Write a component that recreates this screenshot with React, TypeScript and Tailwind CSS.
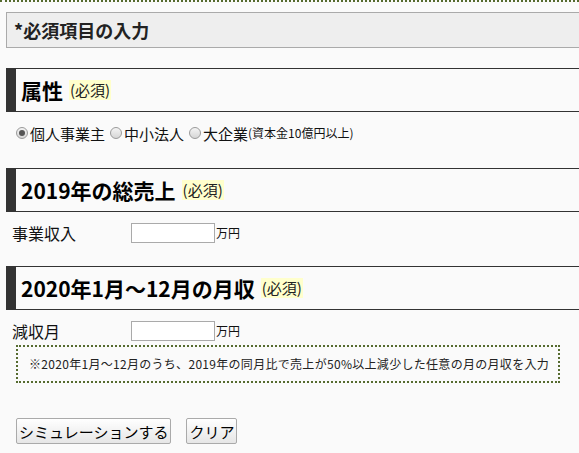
const font = { fontFamily: '"Noto Sans CJK JP", "Noto Sans", sans-serif' };

function SectionTitle({ title }: { title: string }) {
  return (
    <div className="flex h-[44px] items-center border-y border-l-[10px] border-[#333] pl-[5px]">
      <span className="text-[21px] font-bold leading-none text-black">{title}</span>
      <span className="ml-[6px] bg-[#ffffcc] px-[1px] text-[15px] leading-[20px] text-[#222]">(必須)</span>
    </div>
  );
}

function Radio({ label, checked, note }: { label: string; checked?: boolean; note?: string }) {
  return (
    <label className="mr-[3px] flex items-center">
      <span className="mx-[2px] flex h-[12px] w-[12px] items-center justify-center rounded-full border border-[#9a9a9a] bg-gradient-to-b from-[#f4f4f4] to-[#d6d6d6]">
        {checked && <span className="h-[6px] w-[6px] rounded-full bg-[#555]" />}
      </span>
      <span className="text-[15px] leading-none text-[#111]">{label}</span>
      {note && <span className="text-[12px] leading-none text-[#111]">{note}</span>}
    </label>
  );
}

function AmountRow({ label }: { label: string }) {
  return (
    <div className="flex h-[20px] items-center">
      <span className="w-[125px] pl-[6px] text-[16px] leading-none text-[#111]">{label}</span>
      <input type="text" className="h-[20px] w-[84px] border border-[#aaa] bg-white outline-none" />
      <span className="ml-[1px] text-[12px] leading-none text-[#111]">万円</span>
    </div>
  );
}

export default function App() {
  return (
    <div className="min-h-[453px] w-[579px] overflow-hidden bg-[#fafafa] pl-[6px]" style={font}>
      <div className="-ml-[6px] h-[2px] border-t-2 border-dotted border-[#556b2f]" />

      <div className="mt-[10px] flex h-[36px] w-[600px] items-center border border-[#aaa] bg-[#eeeeee] pl-[7px]">
        <span className="text-[18px] font-bold leading-none text-[#222]">*必須項目の入力</span>
      </div>

      <div className="mt-[20px]">
        <SectionTitle title="属性" />
      </div>
      <div className="mt-[11px] flex h-[20px] items-center pl-[8px]">
        <Radio label="個人事業主" checked />
        <Radio label="中小法人" />
        <Radio label="大企業" note="(資本金10億円以上)" />
      </div>

      <div className="mt-[25px]">
        <SectionTitle title="2019年の総売上" />
      </div>
      <div className="mt-[11px]">
        <AmountRow label="事業収入" />
      </div>

      <div className="mt-[23px]">
        <SectionTitle title="2020年1月～12月の月収" />
      </div>
      <div className="mt-[11px]">
        <AmountRow label="減収月" />
      </div>
      <div className="ml-[10px] mt-[4px] flex h-[38px] w-[544px] items-center border-2 border-dotted border-[#556b2f] pl-[11px]">
        <span className="text-[12px] leading-none tracking-[0.3px] text-[#222]">
          ※2020年1月～12月のうち、2019年の同月比で売上が50%以上減少した任意の月の月収を入力
        </span>
      </div>

      <div className="ml-[10px] mt-[35px] flex gap-[15px]">
        <button
          type="button"
          className="h-[26px] rounded-[2px] border border-[#aaa] bg-gradient-to-b from-[#ffffff] to-[#e6e6e6] px-[2px] text-[15px] leading-none text-black"
        >
          シミュレーションする
        </button>
        <button
          type="button"
          className="h-[26px] rounded-[2px] border border-[#aaa] bg-gradient-to-b from-[#ffffff] to-[#e6e6e6] px-[2px] text-[15px] leading-none text-black"
        >
          クリア
        </button>
      </div>
    </div>
  );
}
